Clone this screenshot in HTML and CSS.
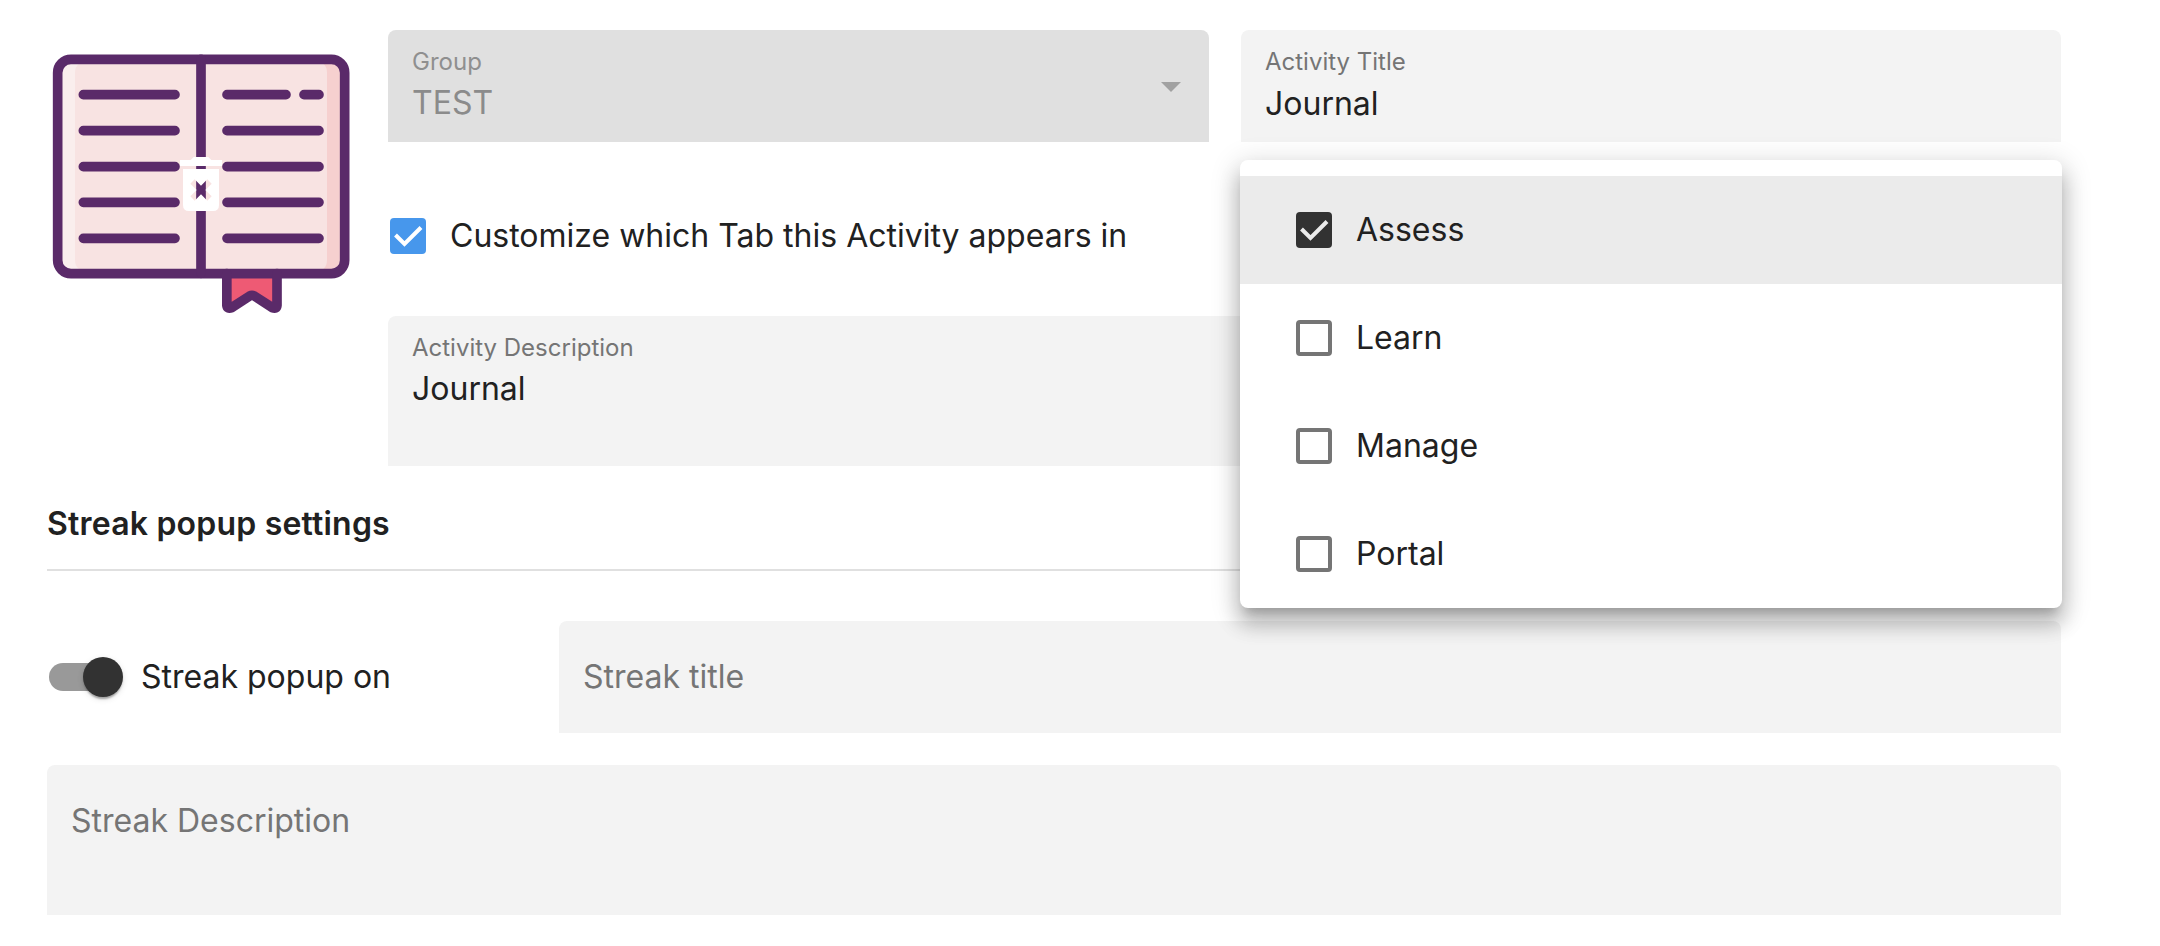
FILE: index.html
```html
<!DOCTYPE html>
<html lang="en">
<head>
<meta charset="utf-8">
<title>Activity settings</title>
<link rel="stylesheet" href="styles.css">
</head>
<body>
<main class="form">
  <section class="activity">
    <svg class="book" viewBox="51 0 1023 900">
      <rect x="82" y="87" width="862" height="644" rx="40" fill="#f8e3e2"/>
      <path d="M147 101H122Q96 103 96 128V690Q96 715 122 717H147Q135 708 135 690V128Q135 110 147 101Z" fill="#faeeed"/>
      <path d="M880 101H904Q930 103 930 128V690Q930 715 904 717H880Q891 708 891 690V128Q891 110 880 101Z" fill="#f6d0cf"/>
      <path d="M590 731H741V835Q736 838 731 835L666 795L603 835Q594 838 590 833Z" fill="#ee5a74"/>
      <g fill="none" stroke="#5a2a69" stroke-width="29" stroke-linejoin="round" stroke-linecap="round">
        <rect x="83" y="88" width="861" height="643" rx="40"/>
        <path d="M513 88V730M590.500 731V826Q592 838 605 833L659 798Q666 794 673 798L727 833Q740 838 741 826V731"/>
        <path d="M160 194H435M160 302H435M160 410H435M160 517H435M160 625H435M591 194H768M822 194H867M591 302H867M591 410H867M591 517H867M591 625H867"/>
      </g>
      <path d="M450 390H482L491 381H535L544 390H576V408H450Z" fill="#fff"/>
      <path fill-rule="evenodd" d="M459 417H567V525Q567 543 549 543H477Q459 543 459 525ZM481 461L500 480L481 499L494 512L513 493L532 512L545 499L526 480L545 461L532 448L513 467L494 448Z" fill="#fff"/>
      <path d="M450 408H576V417H567H459H450Z" fill="#f8e3e2"/>
      <path d="M498.500 408H527.500V417H498.500Z" fill="#5a2a69"/>
    </svg>
    <div class="fields">
      <div class="pair">
        <div class="field field-disabled">
          <span class="label">Group</span>
          <span class="value">TEST</span>
          <svg class="arrow" viewBox="0 0 20 10"><path d="M0 0H20L10 10Z" fill="#a1a1a1"/></svg>
        </div>
        <div class="field field-title">
          <span class="label">Activity Title</span>
          <span class="value">Journal</span>
        </div>
      </div>
      <div class="customize">
        <svg class="box box-blue" viewBox="0 0 36 36"><path d="M5.500 17L14.500 26L31 9.500" fill="none" stroke="#fff" stroke-width="4"/></svg>
        <span>Customize which Tab this Activity appears in</span>
      </div>
      <div class="field field-tall">
        <span class="label">Activity Description</span>
        <span class="value">Journal</span>
      </div>
    </div>
  </section>
  <h2 class="heading">Streak popup settings</h2>
  <section class="streak">
    <div class="toggle-row">
      <span class="toggle"><span class="thumb"></span></span>
      <span>Streak popup on</span>
    </div>
    <div class="field field-empty"><span class="placeholder">Streak title</span></div>
  </section>
  <div class="field field-tall streak-description"><span class="placeholder">Streak Description</span></div>
</main>
<div class="menu">
  <div class="option option-active">
    <svg class="box box-dark" viewBox="0 0 36 36"><path d="M5.500 17L14.500 26L31 9.500" fill="none" stroke="#ebebeb" stroke-width="4"/></svg>
    <span>Assess</span>
  </div>
  <div class="option"><span class="box box-empty"></span><span>Learn</span></div>
  <div class="option"><span class="box box-empty"></span><span>Manage</span></div>
  <div class="option"><span class="box box-empty"></span><span>Portal</span></div>
</div>
</body>
</html>
```
FILE: styles.css
```css
* { box-sizing: border-box; }
body {
  margin: 0;
  background: #fff;
  color: #212121;
  font: 400 32px/40px Inter, sans-serif;
}
.form {
  width: 2061px;
  padding: 30px 0 0 47px;
}
.activity { display: flex; height: 436px; }
.book { width: 341px; height: 300px; flex: none; }
.fields { flex: 1; }
.pair { display: grid; grid-template-columns: 821px 820px; gap: 32px; }
.field {
  position: relative;
  height: 112px;
  padding: 17px 24px 0;
  border-radius: 8px 8px 0 0;
  background: #f3f3f3;
}
.field-disabled { background: #e0e0e0; color: #8b8b8b; }
.label {
  display: block;
  font-size: 24px;
  line-height: 30px;
  color: #757575;
}
.field-disabled .label { color: #8f8f8f; }
.value { display: block; margin-top: 6px; }
.field-title .value { margin-top: 7px; }
.arrow { position: absolute; right: 28px; top: 52px; width: 20px; height: 10px; }
.customize {
  display: flex;
  align-items: center;
  height: 174px;
  padding: 14px 0 0 2px;
  gap: 24px;
}
.box { display: block; flex: none; width: 36px; height: 36px; border-radius: 4px; }
.box-blue { background: #4797ec; }
.box-dark { background: #323232; }
.box-empty { border: 4px solid #757575; }
.field-tall { height: 150px; }
.heading {
  margin: 0;
  height: 105px;
  padding-top: 38px;
  border-bottom: 2px solid #e0e0e0;
  font-size: 32px;
  line-height: 40px;
  font-weight: 600;
  letter-spacing: 0.2px;
}
.streak { display: flex; margin-top: 50px; }
.toggle-row { display: flex; align-items: center; width: 512px; padding-left: 2px; gap: 20px; }
.toggle { display: flex; align-items: center; justify-content: flex-end; width: 72px; height: 28px; border-radius: 14px; background: #999; }
.thumb {
  flex: none;
  width: 40px;
  height: 40px;
  margin-right: -2px;
  border-radius: 50%;
  background: #323232;
  box-shadow: 0 4px 2px -2px rgba(0,0,0,.2), 0 2px 2px rgba(0,0,0,.14), 0 2px 6px rgba(0,0,0,.12);
}
.field-empty { flex: 1; padding-top: 36px; }
.placeholder { display: block; color: #757575; }
.streak-description { margin-top: 32px; padding-top: 36px; }
.menu {
  position: absolute;
  left: 1240px;
  top: 160px;
  width: 822px;
  height: 448px;
  padding-top: 16px;
  border-radius: 8px;
  background: #fff;
  box-shadow: 0 10px 10px -6px rgba(0,0,0,.17), 0 16px 20px 2px rgba(0,0,0,.19), 0 6px 28px 4px rgba(0,0,0,.14);
}
.option { display: flex; align-items: center; gap: 24px; height: 108px; padding-left: 56px; }
.option-active { background: #ebebeb; }
```
